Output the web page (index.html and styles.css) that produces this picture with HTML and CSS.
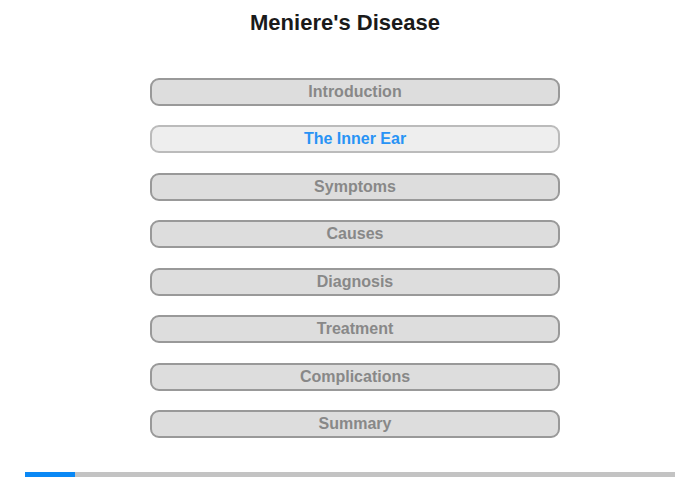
FILE: index.html
```html
<!DOCTYPE html>
<html>
<head>
<meta charset="utf-8">
<link rel="stylesheet" href="styles.css">
</head>
<body>
<div class="page">
  <h1 class="title">Meniere's Disease</h1>
  <nav class="menu">
    <div class="item">Introduction</div>
    <div class="item active">The Inner Ear</div>
    <div class="item">Symptoms</div>
    <div class="item">Causes</div>
    <div class="item">Diagnosis</div>
    <div class="item">Treatment</div>
    <div class="item">Complications</div>
    <div class="item">Summary</div>
  </nav>
  <div class="progress"><div class="progress-fill"></div></div>
</div>
</body>
</html>
```

FILE: styles.css
```css
html, body {
  margin: 0;
  padding: 0;
  background: #fff;
}
.page {
  width: 700px;
  height: 480px;
  font-family: "Liberation Sans", Arial, sans-serif;
  display: flex;
  flex-direction: column;
}
.title {
  margin: 0;
  padding: 10px 10px 0 0;
  height: 25px;
  font-size: 22px;
  line-height: 25px;
  font-weight: bold;
  color: #1a1a1a;
  text-align: center;
}
.menu {
  margin-top: 42.5px;
  padding-left: 150px;
  display: flex;
  flex-direction: column;
  gap: 19.5px;
}
.item {
  box-sizing: border-box;
  width: 410px;
  height: 28px;
  border: 2px solid #999;
  border-radius: 9px;
  background: #ddd;
  color: #888;
  font-size: 16px;
  font-weight: bold;
  line-height: 24px;
  text-align: center;
}
.item.active {
  background: #eee;
  border-color: #bbb;
  color: #2893f5;
}
.progress {
  margin: 33.5px 0 0 25px;
  width: 650px;
  height: 5px;
  background: #c3c3c3;
}
.progress-fill {
  width: 50px;
  height: 5px;
  background: #0a88f5;
}
```
